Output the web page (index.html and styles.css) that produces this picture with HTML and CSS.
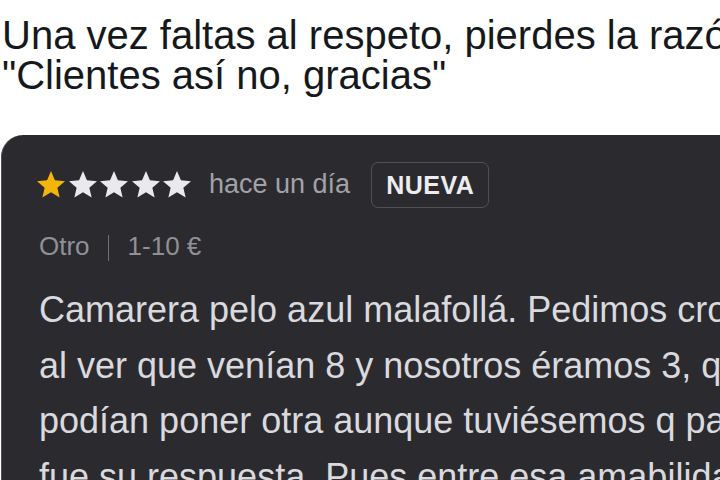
FILE: index.html
```html
<!DOCTYPE html>
<html lang="es">
<head>
<meta charset="utf-8">
<link rel="stylesheet" href="styles.css">
</head>
<body>
<div class="tweet">
  <p class="line">Una vez faltas al respeto, pierdes la razón.</p>
  <p class="line">"Clientes así no, gracias"</p>
</div>
<div class="card">
  <div class="head">
    <div class="stars">
      <svg class="star gold" viewBox="2 2 20 19.3"><path d="M12 17.27L18.18 21l-1.64-7.03L22 9.24l-7.19-.61L12 2 9.19 8.63 2 9.24l5.46 4.73L5.82 21z"/></svg>
      <svg class="star" viewBox="2 2 20 19.3"><path d="M12 17.27L18.18 21l-1.64-7.03L22 9.24l-7.19-.61L12 2 9.19 8.63 2 9.24l5.46 4.73L5.82 21z"/></svg>
      <svg class="star" viewBox="2 2 20 19.3"><path d="M12 17.27L18.18 21l-1.64-7.03L22 9.24l-7.19-.61L12 2 9.19 8.63 2 9.24l5.46 4.73L5.82 21z"/></svg>
      <svg class="star" viewBox="2 2 20 19.3"><path d="M12 17.27L18.18 21l-1.64-7.03L22 9.24l-7.19-.61L12 2 9.19 8.63 2 9.24l5.46 4.73L5.82 21z"/></svg>
      <svg class="star" viewBox="2 2 20 19.3"><path d="M12 17.27L18.18 21l-1.64-7.03L22 9.24l-7.19-.61L12 2 9.19 8.63 2 9.24l5.46 4.73L5.82 21z"/></svg>
    </div>
    <span class="ago">hace un día</span>
    <span class="badge">NUEVA</span>
  </div>
  <div class="meta">
    <span>Otro</span>
    <span class="sep"></span>
    <span>1-10 €</span>
  </div>
  <div class="review">
    <p class="rline">Camarera pelo azul malafollá. Pedimos croquetas y</p>
    <p class="rline">al ver que venían 8 y nosotros éramos 3, que si</p>
    <p class="rline">podían poner otra aunque tuviésemos q pagarla, no</p>
    <p class="rline">fue su respuesta. Pues entre esa amabilidad y</p>
  </div>
</div>
</body>
</html>
```
FILE: styles.css
```css
html, body {
  margin: 0;
  padding: 0;
  background: #ffffff;
  overflow: hidden;
  width: 720px;
  height: 480px;
}
body {
  font-family: "Liberation Sans", Arial, sans-serif;
}
.tweet {
  padding: 15px 0 0 2px;
  color: #16191c;
  font-size: 40px;
  line-height: 40px;
}
.line {
  margin: 0;
  white-space: nowrap;
}
.card {
  margin: 40px 0 0 1px;
  width: 760px;
  height: 400px;
  background: #2b2b2f;
  border-top-left-radius: 22px;
  border-left: 1px solid #505055;
  padding: 26px 0 0 35px;
  box-sizing: border-box;
  overflow: hidden;
}
.head {
  display: flex;
  align-items: center;
  height: 47px;
}
.stars {
  display: flex;
  gap: 3.5px;
}
.star {
  width: 28px;
  height: 27px;
  fill: #e9e9ee;
}
.star.gold {
  fill: #f3b50c;
}
.ago {
  margin-left: 18px;
  font-size: 27px;
  color: #a2a2a8;
}
.badge {
  margin-left: 21px;
  height: 44px;
  line-height: 44px;
  padding: 0 14px;
  border: 1.5px solid #505056;
  border-radius: 7px;
  font-size: 25px;
  font-weight: bold;
  letter-spacing: 0.5px;
  color: #ededf0;
}
.meta {
  margin-top: 23px;
  display: flex;
  align-items: center;
  height: 30px;
  font-size: 26px;
  color: #909096;
  padding-left: 2px;
}
.sep {
  width: 0;
  height: 26px;
  border-left: 1.5px solid #707076;
  margin: 4px 19px 0 18px;
}
.review {
  margin-top: 21px;
  font-size: 36px;
  line-height: 55.5px;
  color: #d9d9de;
  padding-left: 2px;
}
.rline {
  margin: 0;
  white-space: nowrap;
}
```
